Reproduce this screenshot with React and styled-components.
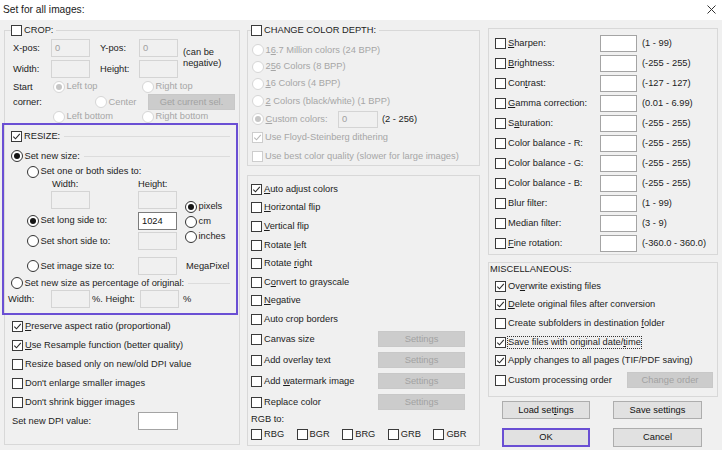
import { Fragment } from 'react'
import styled, { createGlobalStyle } from 'styled-components'

const GlobalStyle = createGlobalStyle`
  * { box-sizing: border-box; }
  html, body { margin: 0; padding: 0; background: #f0f0f0; }
  body {
    font-family: "Liberation Sans", Arial, sans-serif;
    font-size: 9.3px;
    color: #1c1c1c;
  }
  u { text-underline-offset: 1px; }
`

const Window = styled.div`
  width: 722px;
  height: 450px;
  overflow: hidden;
  background: #f0f0f0;
`
const TitleBar = styled.div`
  height: 20px;
  background: #fff;
  display: flex;
  align-items: center;
  justify-content: space-between;
  padding: 0 6px 2px 3px;
  font-size: 10.2px;
  color: #202020;
`
const Columns = styled.div`
  display: flex;
  align-items: flex-start;
  padding: 4px 4px 0 4px;
`
const Column = styled.div`
  width: ${p => p.$w}px;
  margin-left: ${p => p.$ml || 0}px;
  display: flex;
  flex-direction: column;
`
const Group = styled.fieldset`
  margin: ${p => p.$mt || 0}px 0 0 0;
  padding: 0;
  min-width: 0;
  border: 1px solid #d8d8d8;
`
const Legend = styled.legend`
  display: flex;
  align-items: center;
  height: 13px;
  margin-left: ${p => p.$ml}px;
  padding: 0 3px 0 0;
`

/* controls */
const Line = styled.span`
  display: inline-flex;
  align-items: center;
  gap: ${p => p.$gap ?? 2}px;
  height: 13px;
  white-space: nowrap;
  color: ${p => (p.$dim ? '#a6a6a6' : '#1c1c1c')};
`
const Box = styled.span`
  width: 11px;
  height: 11px;
  flex: none;
  background: #fff;
  border: 1px solid ${p => (p.$dim ? '#cdcdcd' : '#3a3a3a')};
  display: inline-flex;
  align-items: center;
  justify-content: center;
`
const Dot = styled.span`
  width: 12px;
  height: 12px;
  flex: none;
  border-radius: 50%;
  background: #fff;
  border: 1px solid ${p => (p.$dim ? '#d6d6d6' : '#333')};
  display: inline-flex;
  align-items: center;
  justify-content: center;
  &::after {
    content: '';
    display: ${p => (p.$on ? 'block' : 'none')};
    width: 6px;
    height: 6px;
    border-radius: 50%;
    background: ${p => (p.$dim ? '#c6c6c6' : '#151515')};
  }
`
const Text = styled.span`
  line-height: 11px;
  outline: ${p => (p.$focus ? '1px dotted #333' : 'none')};
`
const Tick = ({ dim }) => (
  <svg width="9" height="9" viewBox="0 0 9 9">
    <path d="M1.3 4.6 3.5 6.8 7.8 1.9" fill="none" stroke={dim ? '#b8b8b8' : '#2a2a2a'} strokeWidth="1.1" />
  </svg>
)

function Check({ on, dim, focus, children }) {
  return (
    <Line $dim={dim}>
      <Box $dim={dim}>{on && <Tick dim={dim} />}</Box>
      <Text $focus={focus}>{children}</Text>
    </Line>
  )
}

function Radio({ on, dim, children }) {
  return (
    <Line $dim={dim} $gap={1.5}>
      <Dot $dim={dim} $on={on} />
      <Text>{children}</Text>
    </Line>
  )
}

const Field = styled.span`
  display: inline-flex;
  align-items: center;
  width: ${p => p.$w || 39}px;
  height: ${p => p.$h || 18}px;
  padding-left: 3px;
  background: ${p => (p.$white ? '#fff' : '#f0f0f0')};
  border: 1px solid ${p => (p.$dark ? '#7c7c7c' : p.$white ? '#a4a4a4' : '#d4d4d4')};
  color: ${p => (p.$white ? '#111' : '#a0a0a0')};
`
const Btn = styled.div`
  display: flex;
  align-items: center;
  justify-content: center;
  width: ${p => p.$w}px;
  height: ${p => p.$h || 16}px;
  margin-left: ${p => p.$ml || 0}px;
  background: ${p => (p.$off ? '#cccccc' : '#e1e1e1')};
  border: ${p => (p.$focus ? '2px solid #6a4fd4' : p.$off ? '1px solid #c8c8c8' : '1px solid #adadad')};
  color: ${p => (p.$off ? '#a2a2a2' : '#111')};
  white-space: nowrap;
`
const At = styled.div`
  grid-column: ${p => p.$c};
  grid-row: ${p => p.$r};
  padding-left: ${p => p.$pl || 0}px;
  display: flex;
  align-items: center;
  white-space: nowrap;
`

/* left column */
const CropGrid = styled.div`
  display: grid;
  grid-template-columns: 38px 39px 49px 39px auto;
  grid-template-rows: 19px 19px;
  row-gap: 2px;
  align-items: center;
  padding: 1px 0 0 8px;
`
const Note = styled.div`
  grid-column: 5;
  grid-row: 1 / 3;
  padding-left: 5px;
  line-height: 11px;
`
const CornerGrid = styled.div`
  display: grid;
  grid-template-columns: 40px 42px 47px auto;
  grid-template-rows: 15px 16px 13px;
  align-items: center;
  padding: 1px 0 0 8px;
`
const Highlight = styled.div`
  margin-left: -3px;
  width: 236px;
  height: 192px;
  border: 2px solid #6a4fd4;
  padding: 5px 6px 0 7px;
  display: flex;
  flex-direction: column;
`
const Head = styled.div`
  display: flex;
  align-items: center;
  height: ${p => p.$h || 13}px;
  margin-top: ${p => p.$mt || 0}px;
`
const Rule = styled.div`
  flex: 1;
  height: 1px;
  margin-left: 4px;
  background: #dcdcdc;
`
const SidesGrid = styled.div`
  display: grid;
  margin: 2px 0 0 16px;
  grid-template-columns: 24px 87px 39px 8px 1fr;
  grid-template-rows: 13px 11px 21px 21px 20px 5px 20px;
  align-items: center;
`
const Units = styled.div`
  grid-column: 5;
  grid-row: 3 / 6;
  align-self: start;
  padding-top: 10px;
  display: flex;
  flex-direction: column;
  & > span { height: 15px; }
`
const PctRow = styled.div`
  display: grid;
  grid-template-columns: 43px 39px 50px 39px auto;
  height: 18px;
  align-items: center;
  margin-left: -3px;
`
const OptList = styled.div`
  display: grid;
  grid-template-rows: repeat(5, 19px) 18px;
  align-items: center;
  padding: 2px 0 14px 7px;
`
const DpiRow = styled.div`
  display: grid;
  grid-template-columns: 126px 40px;
  align-items: center;
`

/* middle column */
const DepthList = styled.div`
  display: grid;
  grid-template-rows: 16px 17px 17px 18px 18px 19px 18px;
  align-items: center;
  padding: 5px 0 0 4px;
`
const CustomRow = styled.div`
  display: grid;
  grid-template-columns: 86px 40px auto;
  align-items: center;
`
const Range = styled.span`
  padding-left: ${p => p.$pl || 4}px;
  color: #1c1c1c;
  white-space: nowrap;
`
const ActionGrid = styled.div`
  display: grid;
  grid-template-columns: 127px 87px;
  grid-template-rows: repeat(8, 18.6px) repeat(4, 21px) 13px 18px;
  align-items: center;
  padding: 4px 0 1px 3px;
`
const RgbRow = styled.div`
  grid-column: 1 / -1;
  display: grid;
  grid-template-columns: repeat(5, 45.6px);
  align-items: center;
`

/* right column */
const AdjustGrid = styled.div`
  display: grid;
  grid-template-columns: 105px 37px auto;
  grid-template-rows: repeat(11, 20px);
  align-items: center;
  padding: 4px 0 1px 6px;
`
const MiscHead = styled.div`
  height: 12px;
  display: flex;
  align-items: center;
  padding-left: 1px;
  margin-bottom: 2px;
`
const MiscList = styled.div`
  display: grid;
  grid-template-rows: repeat(5, 18.6px) 21px;
  align-items: center;
  padding: 0 0 5px 6px;
`
const OrderRow = styled.div`
  display: grid;
  grid-template-columns: 132px 86px;
  align-items: center;
`
const Buttons = styled.div`
  display: grid;
  grid-template-columns: 88px 89px;
  grid-template-rows: 18px 19px;
  column-gap: 23px;
  row-gap: 9px;
  margin: 4px 0 0 14px;
  & > div { width: auto; height: auto; }
`

const adjustments = [
  [<><u>S</u>harpen:</>, '(1 - 99)'],
  [<><u>B</u>rightness:</>, '(-255 - 255)'],
  [<>Con<u>t</u>rast:</>, '(-127 - 127)'],
  [<><u>G</u>amma correction:</>, '(0.01 - 6.99)'],
  [<>S<u>a</u>turation:</>, '(-255 - 255)'],
  ['Color balance - R:', '(-255 - 255)'],
  ['Color balance - G:', '(-255 - 255)'],
  ['Color balance - B:', '(-255 - 255)'],
  ['Blur filter:', '(1 - 99)'],
  ['Median filter:', '(3 - 9)'],
  [<><u>F</u>ine rotation:</>, '(-360.0 - 360.0)'],
]

const flips = [
  [<><u>A</u>uto adjust colors</>, true],
  [<><u>H</u>orizontal flip</>],
  [<><u>V</u>ertical flip</>],
  [<>Rotate <u>l</u>eft</>],
  [<>Rotate <u>r</u>ight</>],
  [<>C<u>o</u>nvert to grayscale</>],
  [<><u>N</u>egative</>],
  ['Auto crop borders'],
]

const withSettings = ['Canvas size', 'Add overlay text', <>Add <u>w</u>atermark image</>, 'Replace color']

export default function App() {
  return (
    <Window>
      <GlobalStyle />
      <TitleBar>
        <span>Set for all images:</span>
        <svg width="9" height="9" viewBox="0 0 9 9">
          <path d="M0.5 0.5 8.5 8.5 M8.5 0.5 0.5 8.5" stroke="#333" strokeWidth="1" />
        </svg>
      </TitleBar>

      <Columns>
        {/* LEFT */}
        <Column $w={236}>
          <Group>
            <Legend $ml={6}><Check>CROP:</Check></Legend>
            <CropGrid>
              <span>X-pos:</span>
              <Field>0</Field>
              <At $pl={10}>Y-pos:</At>
              <Field>0</Field>
              <Note>(can be<br />negative)</Note>
              <span>Width:</span>
              <Field />
              <At $pl={10}>Height:</At>
              <Field />
            </CropGrid>
            <CornerGrid>
              <At $c="1" $r="1">Start</At>
              <At $c="1" $r="2">corner:</At>
              <At $c="2 / 4" $r="1"><Radio on dim>Left top</Radio></At>
              <At $c="4" $r="1"><Radio dim>Right top</Radio></At>
              <At $c="3" $r="2"><Radio dim>Center</Radio></At>
              <At $c="4" $r="2"><Btn $off $w={87} $ml={6}>Get current sel.</Btn></At>
              <At $c="2 / 4" $r="3"><Radio dim>Left bottom</Radio></At>
              <At $c="4" $r="3"><Radio dim>Right bottom</Radio></At>
            </CornerGrid>

            <Highlight>
              <Head><Check on>RESIZE:</Check><Rule /></Head>
              <Head $h={14} $mt={6}><Radio on>Set new size:</Radio><Rule /></Head>
              <SidesGrid>
                <At $c="1 / -1" $r="1"><Radio>Set one or both sides to:</Radio></At>
                <At $c="2" $r="2" $pl={1}>Width:</At>
                <At $c="3" $r="2">Height:</At>
                <At $c="2" $r="3"><Field /></At>
                <At $c="3" $r="3"><Field /></At>
                <Units>
                  <Radio on>pixels</Radio>
                  <Radio>cm</Radio>
                  <Radio>inches</Radio>
                </Units>
                <At $c="1 / 3" $r="4"><Radio on>Set long side to:</Radio></At>
                <At $c="3" $r="4"><Field $white $dark>1024</Field></At>
                <At $c="1 / 3" $r="5"><Radio>Set short side to:</Radio></At>
                <At $c="3" $r="5"><Field /></At>
                <At $c="1 / 3" $r="7"><Radio>Set image size to:</Radio></At>
                <At $c="3" $r="7"><Field /></At>
                <At $c="5" $r="7" $pl={1}>MegaPixel</At>
              </SidesGrid>
              <Head $h={14}><Radio>Set new size as percentage of original:</Radio><Rule /></Head>
              <PctRow>
                <span>Width:</span>
                <Field />
                <At $pl={2}>%. Height:</At>
                <Field />
                <At $pl={4}>%</At>
              </PctRow>
            </Highlight>

            <OptList>
              <Check on><u>P</u>reserve aspect ratio (proportional)</Check>
              <Check on><u>U</u>se Resample function (better quality)</Check>
              <Check>Resize based only on new/old DPI value</Check>
              <Check>Don't enlarge smaller images</Check>
              <Check>Don't shrink bigger images</Check>
              <DpiRow>
                <span>Set new DPI value:</span>
                <Field $white $w={40} />
              </DpiRow>
            </OptList>
          </Group>
        </Column>

        {/* MIDDLE */}
        <Column $w={233} $ml={7}>
          <Group>
            <Legend $ml={3}><Check>CHANGE COLOR DEPTH:</Check></Legend>
            <DepthList>
              <Radio dim>1<u>6</u>.7 Million colors (24 BPP)</Radio>
              <Radio dim>2<u>5</u>6 Colors (8 BPP)</Radio>
              <Radio dim><u>1</u>6 Colors (4 BPP)</Radio>
              <Radio dim><u>2</u> Colors (black/white) (1 BPP)</Radio>
              <CustomRow>
                <Radio on dim><u>C</u>ustom colors:</Radio>
                <Field $h={17} $w={40}>0</Field>
                <Range>(2 - 256)</Range>
              </CustomRow>
              <Check on dim>Use Floyd-Steinberg dithering</Check>
              <Check dim>Use best color quality (slower for large images)</Check>
            </DepthList>
          </Group>

          <Group $mt={9}>
            <ActionGrid>
              {flips.map(([label, on], i) => (
                <At key={i} $c="1 / -1" $r={i + 1}><Check on={on}>{label}</Check></At>
              ))}
              {withSettings.map((label, i) => (
                <Fragment key={i}>
                  <At $c="1" $r={i + 9}><Check>{label}</Check></At>
                  <At $c="2" $r={i + 9}><Btn $off $w={87}>Settings</Btn></At>
                </Fragment>
              ))}
              <At $c="1 / -1" $r="13">RGB to:</At>
              <RgbRow>
                {['RBG', 'BGR', 'BRG', 'GRB', 'GBR'].map(t => (
                  <Check key={t}>{t}</Check>
                ))}
              </RgbRow>
            </ActionGrid>
          </Group>
        </Column>

        {/* RIGHT */}
        <Column $w={230} $ml={8}>
          <Group $mt={4}>
            <AdjustGrid>
              {adjustments.map(([label, range], i) => (
                <Fragment key={i}>
                  <Check>{label}</Check>
                  <Field $white $w={37} $h={17} />
                  <Range $pl={5}>{range}</Range>
                </Fragment>
              ))}
            </AdjustGrid>
          </Group>

          <Group $mt={7}>
            <MiscHead>MISCELLANEOUS:</MiscHead>
            <MiscList>
              <Check on>Ov<u>e</u>rwrite existing files</Check>
              <Check on><u>D</u>elete original files after conversion</Check>
              <Check>Create subfolders in destination <u>f</u>older</Check>
              <Check on focus>Save files with original date/<u>t</u>ime</Check>
              <Check on>Apply changes to all pages (TIF/PDF saving)</Check>
              <OrderRow>
                <Check>Custom processing order</Check>
                <Btn $off $w={86}>Change order</Btn>
              </OrderRow>
            </MiscList>
          </Group>

          <Buttons>
            <Btn>Load set<u>t</u>ings</Btn>
            <Btn>Save settings</Btn>
            <Btn $focus>OK</Btn>
            <Btn>Cancel</Btn>
          </Buttons>
        </Column>
      </Columns>
    </Window>
  )
}
